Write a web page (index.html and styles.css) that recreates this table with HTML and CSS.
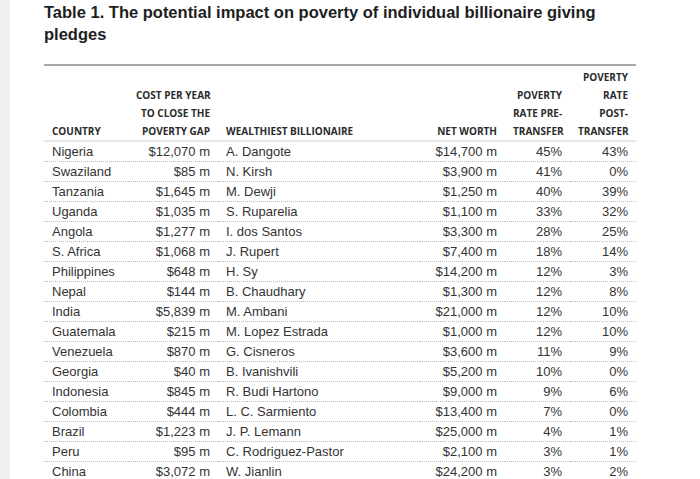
FILE: index.html
```html
<!DOCTYPE html>
<html>
<head>
<meta charset="utf-8">
<link rel="stylesheet" href="styles.css">
</head>
<body>
<div class="page">
  <aside class="gutter"></aside>
  <main class="content">
    <h2 class="title">Table 1. The potential impact on poverty of individual billionaire giving pledges</h2>
    <table class="data">
      <colgroup>
        <col class="c-country"><col class="c-cost"><col class="c-name"><col class="c-worth"><col class="c-pre"><col class="c-post">
      </colgroup>
      <thead>
        <tr>
          <th class="l">Country</th>
          <th class="r">Cost per year<br>to close the<br>poverty gap</th>
          <th class="l">Wealthiest billionaire</th>
          <th class="r">Net worth</th>
          <th class="r">Poverty<br>rate pre-<br>transfer</th>
          <th class="r">Poverty<br>rate<br>post-<br>transfer</th>
        </tr>
      </thead>
      <tbody>
        <tr><td>Nigeria</td><td class="r">$12,070 m</td><td>A. Dangote</td><td class="r">$14,700 m</td><td class="r">45%</td><td class="r">43%</td></tr>
        <tr><td>Swaziland</td><td class="r">$85 m</td><td>N. Kirsh</td><td class="r">$3,900 m</td><td class="r">41%</td><td class="r">0%</td></tr>
        <tr><td>Tanzania</td><td class="r">$1,645 m</td><td>M. Dewji</td><td class="r">$1,250 m</td><td class="r">40%</td><td class="r">39%</td></tr>
        <tr><td>Uganda</td><td class="r">$1,035 m</td><td>S. Ruparelia</td><td class="r">$1,100 m</td><td class="r">33%</td><td class="r">32%</td></tr>
        <tr><td>Angola</td><td class="r">$1,277 m</td><td>I. dos Santos</td><td class="r">$3,300 m</td><td class="r">28%</td><td class="r">25%</td></tr>
        <tr><td>S. Africa</td><td class="r">$1,068 m</td><td>J. Rupert</td><td class="r">$7,400 m</td><td class="r">18%</td><td class="r">14%</td></tr>
        <tr><td>Philippines</td><td class="r">$648 m</td><td>H. Sy</td><td class="r">$14,200 m</td><td class="r">12%</td><td class="r">3%</td></tr>
        <tr><td>Nepal</td><td class="r">$144 m</td><td>B. Chaudhary</td><td class="r">$1,300 m</td><td class="r">12%</td><td class="r">8%</td></tr>
        <tr><td>India</td><td class="r">$5,839 m</td><td>M. Ambani</td><td class="r">$21,000 m</td><td class="r">12%</td><td class="r">10%</td></tr>
        <tr><td>Guatemala</td><td class="r">$215 m</td><td>M. Lopez Estrada</td><td class="r">$1,000 m</td><td class="r">12%</td><td class="r">10%</td></tr>
        <tr><td>Venezuela</td><td class="r">$870 m</td><td>G. Cisneros</td><td class="r">$3,600 m</td><td class="r">11%</td><td class="r">9%</td></tr>
        <tr><td>Georgia</td><td class="r">$40 m</td><td>B. Ivanishvili</td><td class="r">$5,200 m</td><td class="r">10%</td><td class="r">0%</td></tr>
        <tr><td>Indonesia</td><td class="r">$845 m</td><td>R. Budi Hartono</td><td class="r">$9,000 m</td><td class="r">9%</td><td class="r">6%</td></tr>
        <tr><td>Colombia</td><td class="r">$444 m</td><td>L. C. Sarmiento</td><td class="r">$13,400 m</td><td class="r">7%</td><td class="r">0%</td></tr>
        <tr><td>Brazil</td><td class="r">$1,223 m</td><td>J. P. Lemann</td><td class="r">$25,000 m</td><td class="r">4%</td><td class="r">1%</td></tr>
        <tr><td>Peru</td><td class="r">$95 m</td><td>C. Rodriguez-Pastor</td><td class="r">$2,100 m</td><td class="r">3%</td><td class="r">1%</td></tr>
        <tr><td>China</td><td class="r">$3,072 m</td><td>W. Jianlin</td><td class="r">$24,200 m</td><td class="r">3%</td><td class="r">2%</td></tr>
      </tbody>
    </table>
  </main>
</div>
</body>
</html>
```
FILE: styles.css
```css
html, body {
  margin: 0;
  padding: 0;
  background: #ffffff;
}
.page {
  display: flex;
  height: 479px;
  overflow: hidden;
}
.gutter {
  width: 10px;
  flex: none;
  background: #f0f0f0;
}
.content {
  padding-left: 34px;
  width: 592px;
}
.title {
  margin: 0;
  padding-top: 1px;
  font-family: "Liberation Sans", Arial, sans-serif;
  font-weight: bold;
  font-size: 16.5px;
  line-height: 22px;
  color: #1e1e1e;
  padding-bottom: 19px;
  border-bottom: 2px solid #a8a8a8;
}
.data {
  margin-top: 2px;
  border-collapse: collapse;
  table-layout: fixed;
  width: 592px;
  font-family: "Liberation Sans", Arial, sans-serif;
  font-size: 13px;
  color: #333333;
}
.c-country { width: 84px; }
.c-cost { width: 90px; }
.c-name { width: 202px; }
.c-worth { width: 85px; }
.c-pre { width: 65px; }
.c-post { width: 66px; }
.data th {
  font-family: "Open Sans", sans-serif;
  font-weight: bold;
  font-size: 10px;
  line-height: 18px;
  text-transform: uppercase;
  color: #2b2b2b;
  vertical-align: bottom;
  padding: 0 8px;
  border-bottom: 2px solid #e6e6e6;
  white-space: nowrap;
}
.data td {
  padding: 0 8px;
  height: 19px;
  line-height: 19px;
  border-bottom: 1px dotted #bdbdbd;
  white-space: nowrap;
}
.l { text-align: left; }
.r { text-align: right; }
```
